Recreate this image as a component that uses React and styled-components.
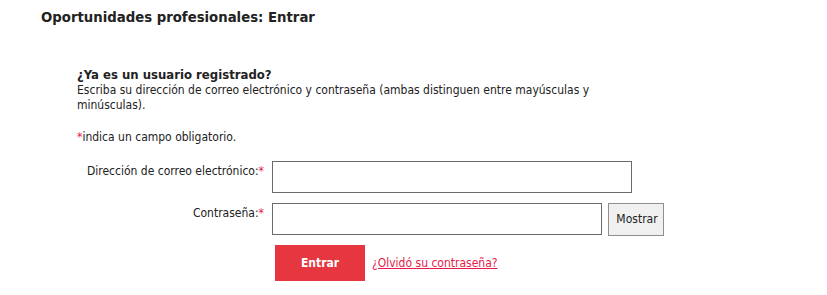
import React from "react";
import styled, { createGlobalStyle } from "styled-components";

const Global = createGlobalStyle`
  html, body { margin: 0; padding: 0; background: #fff; }
  body { font-family: "DejaVu Sans Condensed", "DejaVu Sans", sans-serif; color: #222; }
  * { box-sizing: border-box; }
`;

const Page = styled.div`
  width: 827px;
  height: 295px;
  overflow: hidden;
  background: #fff;
`;

const Title = styled.h1`
  margin: 0;
  padding: 8px 0 0 41px;
  font-size: 14.75px;
  line-height: 18px;
  font-weight: bold;
  color: #222;
`;

const Section = styled.div`
  padding: 41px 0 0 77px;
  font-size: 12px;
  line-height: 15px;
`;

const Question = styled.h2`
  margin: 0;
  font-size: 13px;
  line-height: 16px;
  font-weight: bold;
`;

const Intro = styled.p`
  margin: 0;
  width: 520px;
`;

const Note = styled.p`
  margin: 17px 0 0;
`;

const Star = styled.span`
  color: #e8194a;
`;

const Form = styled.form`
  margin-top: 16px;
  display: grid;
  grid-template-columns: 187px auto;
  column-gap: 8px;
  row-gap: 10px;
  align-items: start;
`;

const Label = styled.label`
  text-align: right;
  padding-top: 3px;
`;

const Field = styled.div`
  display: flex;
  gap: 6px;
  align-items: flex-start;
`;

const Input = styled.input`
  width: ${(p) => p.$w}px;
  height: 32px;
  border: 1px solid #6b6b6b;
  border-radius: 0;
  padding: 0 4px;
  font: inherit;
  background: #fff;
`;

const ShowButton = styled.button`
  width: 56px;
  height: 33px;
  border: 1px solid #8f8f8f;
  background: #f0f0f0;
  font: inherit;
  color: #222;
  padding: 0 0 0 2px;
  border-radius: 0;
`;

const Actions = styled.div`
  grid-column: 2;
  display: flex;
  align-items: center;
  gap: 7px;
  padding-left: 3px;
  margin-top: -1px;
`;

const Submit = styled.button`
  width: 90px;
  height: 36px;
  border: none;
  background: #e63640;
  color: #fff;
  font: inherit;
  font-weight: bold;
  border-radius: 0;
`;

const Forgot = styled.a`
  color: #e8194a;
  text-decoration: underline;
  font-size: 12px;
`;

export default function App() {
  return (
    <Page>
      <Global />
      <Title>Oportunidades profesionales: Entrar</Title>
      <Section>
        <Question>¿Ya es un usuario registrado?</Question>
        <Intro>
          Escriba su dirección de correo electrónico y contraseña (ambas distinguen entre mayúsculas y minúsculas).
        </Intro>
        <Note>
          <Star>*</Star>indica un campo obligatorio.
        </Note>
        <Form onSubmit={(e) => e.preventDefault()}>
          <Label htmlFor="email">
            Dirección de correo electrónico:<Star>*</Star>
          </Label>
          <Field>
            <Input id="email" type="email" $w={360} />
          </Field>
          <Label htmlFor="pwd">
            Contraseña:<Star>*</Star>
          </Label>
          <Field>
            <Input id="pwd" type="password" $w={330} />
            <ShowButton type="button">Mostrar</ShowButton>
          </Field>
          <Actions>
            <Submit type="submit">Entrar</Submit>
            <Forgot href="#">¿Olvidó su contraseña?</Forgot>
          </Actions>
        </Form>
      </Section>
    </Page>
  );
}
